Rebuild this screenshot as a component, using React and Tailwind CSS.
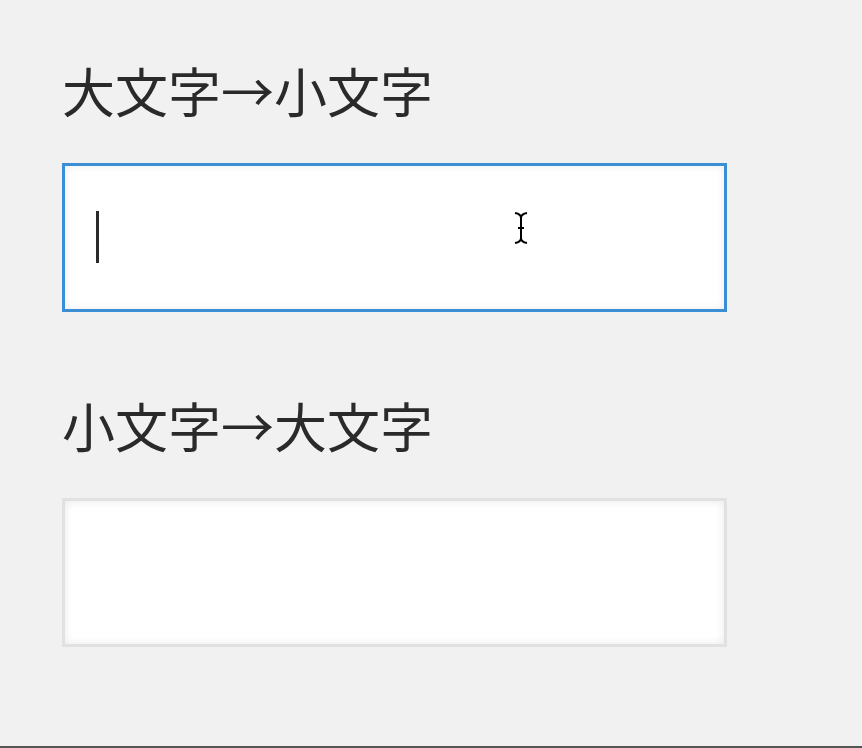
import React from 'react'

const font = { fontFamily: '"Noto Sans CJK JP", "Noto Sans", sans-serif' }

const Field = ({ label, focused }) => (
  <div className='flex flex-col'>
    <div className='text-[53px] leading-none text-[#2a2a2a]' style={font}>
      {label}
    </div>
    <div
      className={
        'relative mt-[46px] h-[149px] w-[665px] bg-white ' +
        (focused
          ? 'border-[3px] border-[#3b8ed3] shadow-[inset_0_0_8px_rgba(0,0,0,0.08)]'
          : 'border-[3px] border-[#e1e1e3] shadow-[inset_0_0_10px_rgba(0,0,0,0.09)]')
      }
    >
      {focused && (
        <div className='absolute left-[31px] top-[45px] h-[52px] w-[3px] bg-[#2a2a2a]' />
      )}
    </div>
  </div>
)

export default function App () {
  return (
    <div className='relative flex h-[748px] w-full flex-col gap-[87px] border-b-2 border-[#555] bg-[#f1f1f1] pl-[62px] pt-[64px]'>
      <Field label='大文字→小文字' focused />
      <Field label='小文字→大文字' />
      {/* mouse pointer over the first box */}
      <svg
        className='absolute left-[513px] top-[211px]'
        width='16'
        height='34'
        viewBox='0 0 16 34'
      >
        <path
          d='M2 2 Q8 3 8 7 Q8 3 14 2 M8 7 V27 M8 27 Q8 31 2 32 M8 27 Q8 31 14 32 M5 17 H11'
          stroke='#000'
          strokeWidth='2'
          fill='none'
        />
      </svg>
    </div>
  )
}
